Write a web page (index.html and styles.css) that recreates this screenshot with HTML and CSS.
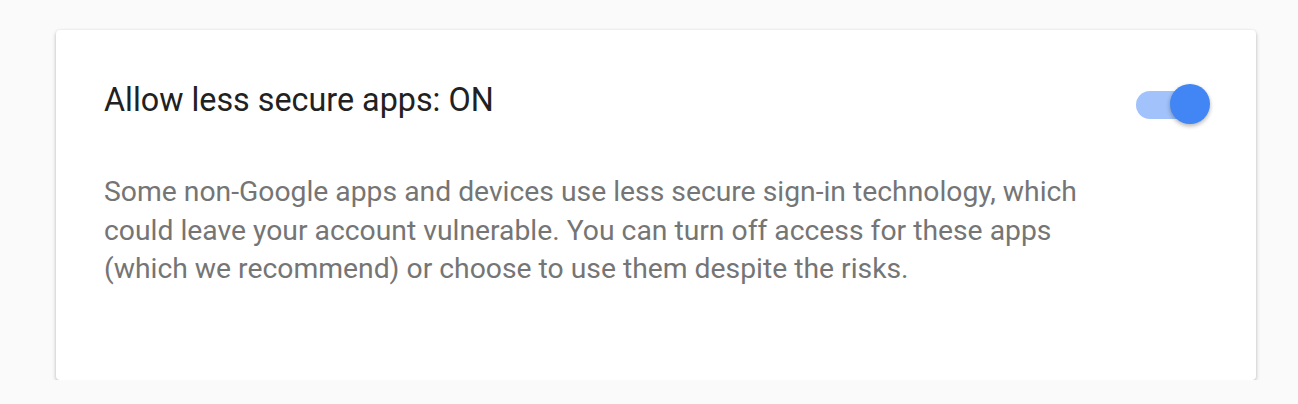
FILE: index.html
```html
<!DOCTYPE html>
<html lang="en">
<head>
    <meta charset="UTF-8">
    <title>Less secure apps</title>
    <link rel="stylesheet" href="styles.css">
</head>
<body>
<div class="SettingCard">
    <div class="SettingHeader">
        <h1 class="SettingTitle">Allow less secure apps: ON</h1>
        <!-- toggle is on -->
        <div class="Toggle ToggleOn">
            <div class="ToggleTrack"></div>
            <div class="ToggleKnob"></div>
        </div>
    </div>
    <p class="SettingText">
        Some non-Google apps and devices use less secure sign-in technology, which
        could leave your account vulnerable. You can turn off access for these apps
        (which we recommend) or choose to use them despite the risks.
    </p>
</div>
</body>
</html>
```

FILE: styles.css
```css
body {
    margin: 0;
    background-color: #fafafa;
    font-family: Roboto, "Liberation Sans", sans-serif;
}

.SettingCard {
    margin: 30px 42px 0 56px;
    height: 350px;
    box-sizing: border-box;
    padding: 50px 46px 0 48px;
    background-color: #fff;
    border-radius: 4px;
    box-shadow: 0 2px 4px rgba(0, 0, 0, 0.24), 0 0 2px rgba(0, 0, 0, 0.08);
}

.SettingHeader {
    display: flex;
    justify-content: space-between;
    align-items: flex-start;
}

.SettingTitle {
    margin: 0;
    font-size: 32.3px;
    font-weight: 400;
    line-height: 40px;
    color: #212121;
}

.Toggle {
    position: relative;
    width: 74px;
    height: 40px;
    margin-top: 4px;
}

.ToggleTrack {
    position: absolute;
    left: 0;
    top: 7px;
    width: 64px;
    height: 28px;
    border-radius: 14px;
    background-color: #a1c2fa;
}

.ToggleKnob {
    position: absolute;
    right: 0;
    top: 0;
    width: 40px;
    height: 40px;
    border-radius: 50%;
    background-color: #4285f4;
    box-shadow: 0 2px 4px rgba(0, 0, 0, 0.3);
}

.SettingText {
    margin: 49px 0 0 0;
    max-width: 1000px;
    font-size: 28.3px;
    line-height: 38.5px;
    color: #757575;
}
```
